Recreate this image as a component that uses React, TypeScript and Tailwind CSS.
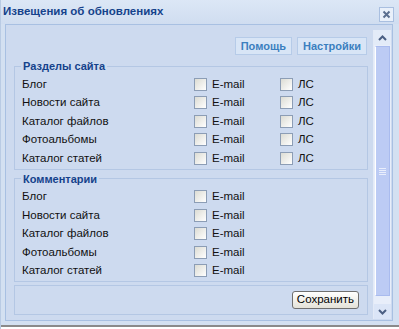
import React from 'react';

const sections = ['Блог', 'Новости сайта', 'Каталог файлов', 'Фотоальбомы', 'Каталог статей'];

const Check: React.FC = () => (
  <span className="inline-block w-[13px] h-[13px] border border-[#8c9db5] bg-gradient-to-br from-[#dcdcd4] to-white shrink-0" />
);

const Row: React.FC<{ label: string; pm?: boolean }> = ({ label, pm }) => (
  <div className="flex items-center h-[18.5px]">
    <span className="w-[179px] pl-[7px]">{label}</span>
    <Check />
    <span className="ml-[5px] w-[68px]">E-mail</span>
    {pm && (
      <>
        <Check />
        <span className="ml-[5px]">ЛС</span>
      </>
    )}
  </div>
);

const Group: React.FC<{ title: string; pm?: boolean; className?: string }> = ({ title, pm, className }) => (
  <fieldset className={`border border-[#b4c7e4] ${className ?? ''}`}>
    <legend className="ml-[6px] px-[2px] font-bold text-[11px] leading-[12px] text-[#15428b]">{title}</legend>
    {sections.map((s) => (
      <Row key={s} label={s} pm={pm} />
    ))}
  </fieldset>
);

export default function App() {
  return (
    <div
      className="w-[399px] h-[329px] bg-[#d3e0f1] flex flex-col text-[11.5px] text-[#111] border-l border-[#b9cbe4] overflow-hidden"
      style={{ fontFamily: '"Liberation Sans", Arial, sans-serif' }}
    >
      {/* title bar */}
      <div className="h-[24px] flex items-center justify-between pl-[2px] pr-[5px] bg-gradient-to-b from-[#dce7f6] to-[#d0ddf0]">
        <span className="font-bold text-[11.5px] text-[#15428b]">Извещения об обновлениях</span>
        <span className="w-[15px] h-[15px] mt-[5px] border border-[#a9bfe0] bg-[#e9f0fa] flex items-center justify-center">
          <svg width="9" height="9" viewBox="0 0 9 9">
            <path d="M1.5 1.5 L7.5 7.5 M7.5 1.5 L1.5 7.5" stroke="#5b6f8f" strokeWidth="2" />
          </svg>
        </span>
      </div>

      {/* body */}
      <div className="ml-[4px] mr-[6px] h-[297px] border border-[#a8c0e2] bg-[#cddaef] flex">
        <div className="flex-1 flex flex-col pl-[8px] pr-[5px] pt-[12px]">
          <div className="flex justify-end gap-[5px] pr-[1px] h-[18px]">
            <span className="px-[5px] border border-[#b6cbe8] bg-[#d8e5f6] text-[#3b7fbf] font-bold text-[11px] flex items-center">Помощь</span>
            <span className="px-[5px] border border-[#b6cbe8] bg-[#d8e5f6] text-[#3b7fbf] font-bold text-[11px] flex items-center">Настройки</span>
          </div>
          <Group title="Разделы сайта" pm className="mt-[5px] pt-[3px] pb-[1px]" />
          <Group title="Комментарии" className="mt-[3px] pt-[3px] pb-[1px]" />
          <div className="mt-[3px] h-[30px] border border-[#b4c7e4] flex items-center justify-end pr-[8px]">
            <button className="h-[18px] px-[4px] rounded-[3px] border border-[#6f6f6f] bg-gradient-to-b from-white to-[#e4e2d8] text-[11.5px] leading-none text-black">
              Сохранить
            </button>
          </div>
        </div>

        {/* scrollbar */}
        <div className="w-[18px] mt-[5px] mb-[1px] mr-[1px] bg-[#e8eefa] flex flex-col border-l border-[#e3eaf7]">
          <div className="h-[15px] flex items-center justify-center bg-[#e3ebf8]">
            <svg width="9" height="6" viewBox="0 0 9 6">
              <path d="M1 5 L4.5 1.5 L8 5" stroke="#4b5f83" strokeWidth="2" fill="none" />
            </svg>
          </div>
          <div className="flex-1 mx-[1px] my-[1px] mb-[8px] bg-[#bccbf4] border border-[#a9bbee] border-l-white flex items-center justify-center">
            <div className="flex flex-col gap-[1px]">
              <span className="block w-[7px] h-[1px] bg-[#e9eefc]" />
              <span className="block w-[7px] h-[1px] bg-[#e9eefc]" />
              <span className="block w-[7px] h-[1px] bg-[#e9eefc]" />
              <span className="block w-[7px] h-[1px] bg-[#e9eefc]" />
            </div>
          </div>
          <div className="h-[15px] flex items-center justify-center bg-[#dbe5f7]">
            <svg width="9" height="6" viewBox="0 0 9 6">
              <path d="M1 1 L4.5 4.5 L8 1" stroke="#4b5f83" strokeWidth="2" fill="none" />
            </svg>
          </div>
        </div>
      </div>

      <div className="flex-1" />
      <div className="h-[2px] bg-[#8a8a8a]" />
      <div className="h-[2px] bg-white" />
    </div>
  );
}
